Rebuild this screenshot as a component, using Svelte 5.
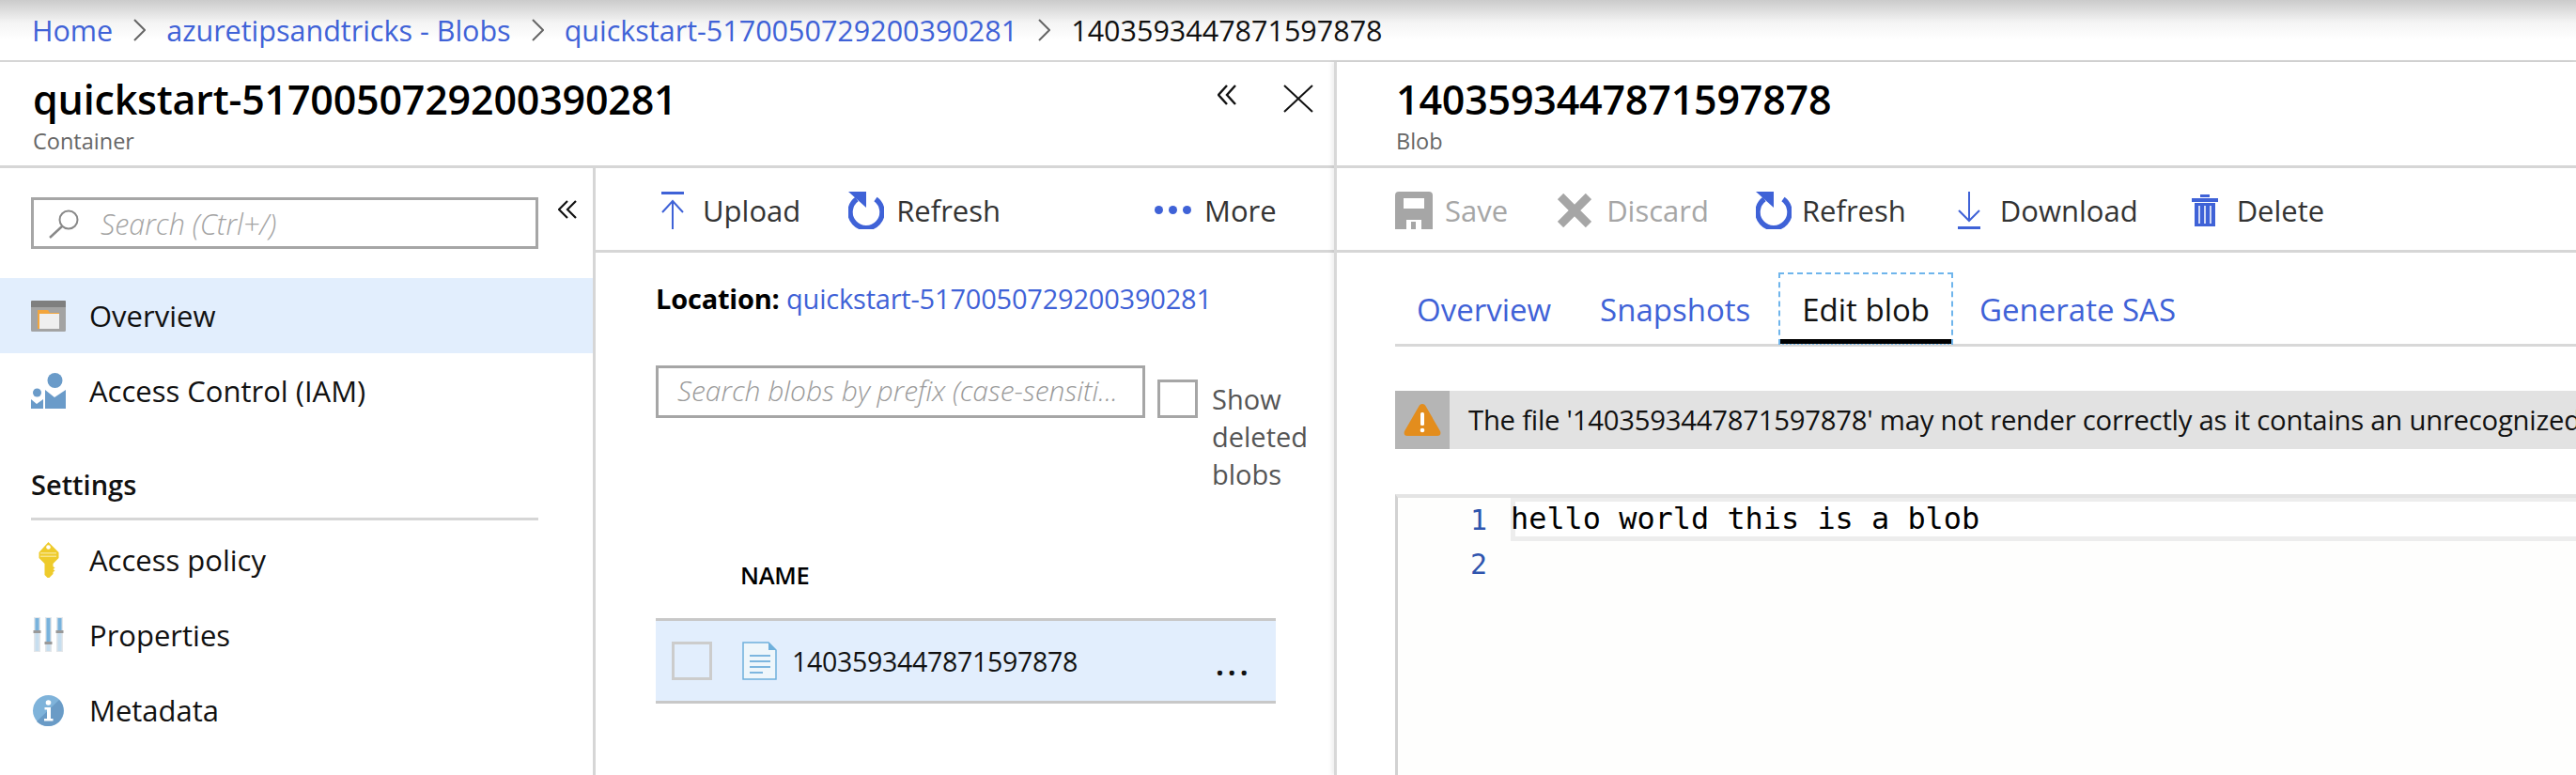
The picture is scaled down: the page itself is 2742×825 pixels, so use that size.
<script>
  const crumbs = ['Home', 'azuretipsandtricks - Blobs', 'quickstart-5170050729200390281'];
  const id = '1403593447871597878';
  const container = 'quickstart-5170050729200390281';
</script>

<div class="page">
  <nav class="crumbs">
    {#each crumbs as c}
      <span class="link">{c}</span>
      <svg class="sep" width="13" height="24" viewBox="0 0 13 24"><path d="M1 1l11 11L1 23" fill="none" stroke="#666" stroke-width="2"/></svg>
    {/each}
    <span class="cur">{id}</span>
  </nav>

  <div class="panes">
    <section class="left">
      <header class="head">
        <div class="titles">
          <h1>{container}</h1>
          <p>Container</p>
        </div>
        <div class="head-actions">
          <svg width="20" height="22" viewBox="0 0 20 22"><path d="M10 1L1 11l9 10M19 1l-9 10 9 10" fill="none" stroke="#111" stroke-width="2.4"/></svg>
          <svg class="close" width="32" height="30" viewBox="0 0 32 30"><path d="M1 1l30 28M31 1L1 29" fill="none" stroke="#111" stroke-width="2"/></svg>
        </div>
      </header>

      <div class="split">
        <aside class="side">
          <div class="side-top">
            <div class="sbox">
              <svg width="36" height="32" viewBox="0 0 36 32"><circle cx="22" cy="12" r="9.5" fill="none" stroke="#888" stroke-width="2"/><path d="M15 19L2 31" stroke="#888" stroke-width="2.4"/></svg>
              <span>Search (Ctrl+/)</span>
            </div>
            <svg class="collapse" width="20" height="20" viewBox="0 0 20 20"><path d="M10 1L1 10l9 9M19 1l-9 9 9 9" fill="none" stroke="#111" stroke-width="2.2"/></svg>
          </div>

          <div class="nav active">
            <svg width="37" height="33" viewBox="0 0 37 33"><rect width="37" height="33" rx="1.5" fill="#a3a3a3"/><path d="M0 7V2a1.5 1.5 0 0 1 1.500-2H36a1 1 0 0 1 1 1v6z" fill="#7f7f7f"/><path d="M7 30V10h11l2 3h10v1H10v16z" fill="#f3a53c"/><rect x="9" y="14" width="21" height="16" fill="#efefef"/></svg>
            <span>Overview</span>
          </div>
          <div class="nav">
            <svg width="37" height="38" viewBox="0 0 37 38"><circle cx="25.500" cy="8" r="8" fill="#6a9bc9"/><circle cx="6.500" cy="21" r="4.500" fill="#6a9bc9"/><path d="M15 18l10 8 12-8v20H15zM0 28l6 5 7-5v10H0z" fill="#6a9bc9"/></svg>
            <span>Access Control (IAM)</span>
          </div>

          <h2>Settings</h2>

          <div class="nav">
            <svg width="37" height="38" viewBox="0 0 37 38"><path d="M18.500 0l11 11v6l-6 6v3l2 1.500-2 1.500 2 1.500-2 1.500v2l-5 5-4-4V23l-6-6v-6z" fill="#eecb2b"/><circle cx="18.500" cy="5.500" r="2.300" fill="#fff"/><path d="M10 11h17v1.600H10zM10 14.500h17V16H10z" fill="#f7e48a"/></svg>
            <span>Access policy</span>
          </div>
          <div class="nav">
            <svg width="37" height="38" viewBox="0 0 37 38"><g fill="#e3e6e9"><rect x="3" width="7" height="37"/><rect x="15" width="7" height="37"/><rect x="27" width="7" height="37"/></g><g fill="#c7deef"><rect x="4.500" y="1" width="4" height="35"/><rect x="16.500" y="1" width="4" height="35"/><rect x="28.500" y="1" width="4" height="35"/></g><g fill="#78b2dc"><rect x="4.500" y="1" width="4" height="13"/><rect x="16.500" y="1" width="4" height="25"/><rect x="28.500" y="1" width="4" height="13"/></g><g fill="#999"><rect x="2.500" y="14" width="8" height="3"/><rect x="14.500" y="26" width="8" height="3"/><rect x="26.500" y="14" width="8" height="3"/></g></svg>
            <span>Properties</span>
          </div>
          <div class="nav">
            <svg width="37" height="35" viewBox="0 0 37 35"><circle cx="18.500" cy="17.500" r="16.500" fill="#7fb3da"/><path d="M30 6a16.500 16.500 0 0 1-24 23z" fill="#6a9bc6"/><circle cx="18.500" cy="9" r="2.800" fill="#fff"/><path d="M14.500 14h6.500v12h2.500v2.500H14V26h3V16.500h-2.500z" fill="#fff"/></svg>
            <span>Metadata</span>
          </div>
        </aside>

        <main class="blobs">
          <div class="toolbar t-left">
            <span class="tool up"><svg class="blue" width="26" height="40" viewBox="0 0 26 40"><path d="M1 1.500h24" stroke-width="3"/><path d="M13 40V10M2 22L13 10l11 12" stroke-width="2"/></svg><b>Upload</b></span>
            <span class="tool rf"><svg width="38" height="40" viewBox="0 0 38 40"><path d="M29 8a17 17 0 1 1-20 0" fill="none" stroke="#3f62d7" stroke-width="5.500"/><path d="M0 0h19v17z" fill="#3f62d7"/></svg><b>Refresh</b></span>
            <span class="tool more"><i></i><i></i><i></i><b>More</b></span>
          </div>

          <div class="blob-body">
            <p class="loc"><strong>Location:</strong> <span class="link">{container}</span></p>

            <div class="filters">
              <div class="fbox">Search blobs by prefix (case-sensiti...</div>
              <div class="check"></div>
              <div class="show">Show<br>deleted<br>blobs</div>
            </div>

            <div class="name-h">NAME</div>
            <div class="row">
              <div class="rcheck"></div>
              <svg width="37" height="41" viewBox="0 0 37 41"><path d="M1 1h27l8 8v31H1z" fill="#eef6fb" stroke="#6fb0dc" stroke-width="1.500"/><path d="M28 1v8h8z" fill="#6fb0dc"/><path d="M8 15h22M8 21h22M8 27h22M8 33h14" stroke="#7db6df" stroke-width="2"/></svg>
              <span class="rname">{id}</span>
              <span class="dots">...</span>
            </div>
          </div>
        </main>
      </div>
    </section>

    <section class="right">
      <header class="head rhead">
        <div class="titles">
          <h1>{id}</h1>
          <p>Blob</p>
        </div>
      </header>

      <div class="toolbar t-right">
        <span class="tool dis save"><svg width="40" height="40" viewBox="0 0 40 40"><path d="M0 4a4 4 0 0 1 4-4h32a4 4 0 0 1 4 4v36H28V30H12v10H0zM9 7v11h22V7z" fill="#a6a6a6" fill-rule="evenodd"/><rect x="17" y="32" width="5" height="8" fill="#a6a6a6"/></svg><b>Save</b></span>
        <span class="tool dis disc"><svg width="36" height="36" viewBox="0 0 36 36"><path d="M3 3l30 30M33 3L3 33" stroke="#a6a6a6" stroke-width="9"/></svg><b>Discard</b></span>
        <span class="tool rf2"><svg width="38" height="40" viewBox="0 0 38 40"><path d="M29 8a17 17 0 1 1-20 0" fill="none" stroke="#3f62d7" stroke-width="5.500"/><path d="M0 0h19v17z" fill="#3f62d7"/></svg><b>Refresh</b></span>
        <span class="tool dl"><svg class="blue" width="26" height="40" viewBox="0 0 26 40"><path d="M13 0v31M2 20l11 11 11-11" stroke-width="2"/><path d="M1 38.500h24" stroke-width="3"/></svg><b>Download</b></span>
        <span class="tool del"><svg width="28" height="34" viewBox="0 0 28 34"><path d="M9 0h10v3H9zM0 4h28v4H0zM3 9h22v25H3z" fill="#3f62d7"/><path d="M8 12v19M14 12v19M20 12v19" stroke="#fff" stroke-width="1.500"/></svg><b>Delete</b></span>
      </div>

      <div class="content">
        <div class="tabs">
          <span class="tab link">Overview</span>
          <span class="tab link">Snapshots</span>
          <span class="tab sel">Edit blob</span>
          <span class="tab link">Generate SAS</span>
        </div>

        <div class="alert">
          <div class="a-icon"><svg width="40" height="34" viewBox="0 0 40 34"><path d="M20 0c2 0 3 1 4 3l15 26c1 3 0 5-3 5H4c-3 0-4-2-3-5L16 3c1-2 2-3 4-3z" fill="#e38d1d"/><rect x="18" y="9" width="4" height="14" rx="1.500" fill="#fff"/><circle cx="20" cy="28" r="2.300" fill="#fff"/></svg></div>
          <div class="a-text">The file '{id}' may not render correctly as it contains an unrecognized</div>
        </div>

        <div class="editor">
          <div class="gutter"><span>1</span><span>2</span></div>
          <div class="code"><div class="line">hello world this is a blob</div></div>
        </div>
      </div>
    </section>
  </div>
</div>

<style>
  :global(body) { margin: 0; background: #fff; }
  .page {
    width: 2742px; height: 825px; overflow: hidden; display: flex; flex-direction: column;
    font-family: "Open Sans", "Noto Sans", sans-serif; color: #111; background: #fff;
  }
  .link { color: #3f62d7; }
  .crumbs {
    height: 66px; flex: none; box-sizing: border-box; border-bottom: 2px solid #d6d6d6;
    display: flex; align-items: center; padding: 0 0 0 34px;
    font-size: 30.500px;
    background: linear-gradient(#cbcbcb 0, #f4f4f4 24px, #fff 42px);
  }
  .sep { margin: 0 22px; flex: none; }
  .panes { flex: 1; display: flex; min-height: 0; }
  .left { width: 1420px; flex: none; display: flex; flex-direction: column; }
  .right { flex: 1; min-width: 0; display: flex; flex-direction: column; border-left: 3px solid #d8d8d8; box-shadow: -3px 0 4px rgba(0,0,0,.06); }
  .head {
    height: 113px; flex: none; box-sizing: border-box; border-bottom: 3px solid #d6d6d6;
    display: flex; justify-content: space-between; padding: 17px 22px 0 35px;
  }
  .rhead { padding-left: 63px; }
  h1 { margin: 0; font-size: 43px; line-height: 46px; font-weight: 600; color: #000; letter-spacing: -0.2px; }
  .titles p { margin: 5px 0 0; font-size: 23.500px; line-height: 32px; color: #666; }
  .head-actions { display: flex; gap: 50px; padding-top: 7px; }
  .split { flex: 1; display: flex; min-height: 0; }
  .side { width: 634px; flex: none; box-sizing: border-box; border-right: 3px solid #d6d6d6; }
  .side-top { height: 117px; box-sizing: border-box; padding: 31px 0 0 33px; display: flex; gap: 21px; }
  .sbox {
    width: 540px; height: 55px; box-sizing: border-box; border: 3px solid #a6a6a6;
    display: flex; align-items: center; gap: 20px; padding-left: 15px;
    font-style: italic; font-size: 30.500px; color: #a3a3a3; font-weight: 300;
  }
  .collapse { margin-top: 3px; }
  .nav { height: 80px; display: flex; align-items: center; padding-left: 33px; font-size: 31px; color: #111; }
  .nav svg { width: 37px; flex: none; margin-right: 25px; }
  .nav.active { background: #e2eefd; }
  h2 { margin: 40px 0 0 33px; width: 540px; height: 58px; box-sizing: border-box; border-bottom: 3px solid #d6d6d6; font-size: 29px; line-height: 40px; font-weight: 600; color: #111; }
  h2 + .nav { margin-top: 2px; }
  .blobs { flex: 1; display: flex; flex-direction: column; min-width: 0; }
  .toolbar { display: flex; align-items: center; flex: none; box-sizing: border-box; border-bottom: 3px solid #d6d6d6; height: 90px; padding-top: 2px; }
  .tool { display: flex; align-items: center; }
  .tool b { font-weight: 400; font-size: 31px; color: #333; }
  .t-left { padding-left: 69px; }
  .blue { fill: none; stroke: #3f62d7; }
  .up b { margin-left: 19px; }
  .rf { margin-left: 51px; }
  .rf b { margin-left: 13px; }
  .more { margin-left: 164px; }
  .more i { width: 9px; height: 9px; border-radius: 50%; background: #3f62d7; margin-right: 6px; }
  .more b { margin-left: 8px; }
  .blob-body { padding: 0 0 0 64px; }
  .loc { margin: 31px 0 0; font-size: 29px; line-height: 36px; letter-spacing: -0.2px; white-space: nowrap; }
  .loc strong { font-weight: 700; color: #000; }
  .filters { display: flex; margin-top: 53px; align-items: flex-start; }
  .fbox {
    width: 521px; height: 56px; box-sizing: border-box; border: 3px solid #a6a6a6; padding-left: 20px;
    font-style: italic; font-weight: 300; font-size: 30px; line-height: 48px; color: #9a9a9a; white-space: nowrap; overflow: hidden;
  }
  .check { width: 43px; height: 41px; box-sizing: border-box; border: 3px solid #a6a6a6; margin: 15px 15px 0 13px; flex: none; }
  .show { font-size: 29px; line-height: 40px; color: #555; margin-top: 16px; }
  .name-h { margin: 71px 0 0 90px; font-size: 25.500px; line-height: 32px; font-weight: 600; color: #000; letter-spacing: -0.3px; }
  .row {
    width: 660px; height: 91px; box-sizing: border-box; margin-top: 30px; background: #e2eefd;
    border-top: 3px solid #c8c8c8; border-bottom: 3px solid #c8c8c8; display: flex; align-items: center; padding-left: 17px;
  }
  .rcheck { width: 43px; height: 41px; box-sizing: border-box; border: 3px solid #ccc; flex: none; margin-right: 32px; }
  .rname { margin-left: 16px; font-size: 28.500px; color: #111; letter-spacing: -0.3px; }
  .dots { margin-left: auto; margin-right: 26px; font-size: 36px; line-height: 1; font-weight: 600; letter-spacing: 3px; color: #111; transform: translateY(2px); }
  .t-right { padding-left: 62px; }
  .t-right .tool b { margin-left: 13px; }
  .dis b { color: #a6a6a6 !important; }
  .disc { margin-left: 53px; }
  .disc b { margin-left: 16px !important; }
  .rf2 { margin-left: 50px; }
  .rf2 b { margin-left: 11px !important; }
  .dl { margin-left: 54px; }
  .dl b { margin-left: 20px !important; }
  .del { margin-left: 57px; }
  .del b { margin-left: 20px !important; }
  .content { flex: 1; min-height: 0; padding-left: 62px; }
  .tabs { height: 100px; box-sizing: border-box; border-bottom: 3px solid #d8d8d8; display: flex; align-items: flex-end; font-size: 33px; }
  .tab { height: 77px; box-sizing: border-box; padding: 17px 26px 0; margin-bottom: -1px; white-space: nowrap; }
  .tab:first-child { margin-left: -3px; }
  .tab.sel { color: #111; border: 2px dashed #6fb5ec; border-bottom: 2px dotted #6fb5ec; position: relative; padding: 15px 23px 0; margin: 0 2px -1px 4px; }
  .tab.sel::after { content: ""; position: absolute; left: 0; right: 0; bottom: -1px; height: 5px; background: #000; }
  .alert { display: flex; height: 62px; margin-top: 47px; background: #e2e2e2; }
  .a-icon { width: 58px; flex: none; background: #b5b5b5; display: flex; align-items: center; justify-content: center; }
  .a-text { padding-left: 20px; font-size: 29.300px; line-height: 62px; letter-spacing: -0.25px; white-space: nowrap; color: #111; }
  .editor { height: 400px; margin-top: 48px; border-top: 4px solid #e4e4e4; border-left: 3px solid #d2d2d2; background: #fefefd; display: flex; }
  .gutter { width: 120px; flex: none; box-sizing: border-box; padding: 0 25px 0 0; text-align: right; font-family: "DejaVu Sans Mono", monospace; font-size: 30px; line-height: 47px; color: #2f55ae; display: flex; flex-direction: column; }
  .code { flex: 1; min-width: 0; }
  .line { height: 46px; box-sizing: border-box; border: solid #ededed; border-width: 4px 0 5px 5px; background: #fff; font-family: "DejaVu Sans Mono", monospace; font-size: 31.900px; line-height: 36px; color: #000; white-space: pre; text-indent: -5px; }
</style>
